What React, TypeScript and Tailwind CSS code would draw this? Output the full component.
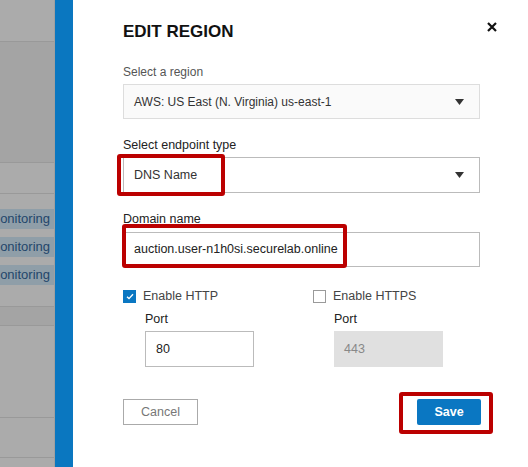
import React from 'react';

const font = { fontFamily: '"Liberation Sans", Arial, sans-serif' };

const MonitorRow = () => (
  <div className="flex h-[20px] items-center justify-end bg-[#8f9ea8] pr-[4px] text-[13px] text-[#23466b] whitespace-nowrap">
    onitoring
  </div>
);

const Caret = () => (
  <svg width="9" height="6" viewBox="0 0 9 6" className="fill-[#333]">
    <path d="M0 0 L9 0 L4.5 6 Z" />
  </svg>
);

const Checkbox = ({ checked }: { checked?: boolean }) =>
  checked ? (
    <span className="flex h-[13px] w-[13px] items-center justify-center bg-[#0a77c2]">
      <svg width="8" height="7" viewBox="0 0 8 7" fill="none">
        <path d="M1 3.8 L3 5.6 L7 1.2" stroke="white" strokeWidth="1.4" />
      </svg>
    </span>
  ) : (
    <span className="h-[13px] w-[13px] border border-[#9a9a9a] bg-white" />
  );

export default function App() {
  return (
    <div className="flex h-[467px] w-[528px] overflow-hidden" style={font}>
      {/* page behind the drawer */}
      <div className="flex w-[55px] flex-col border-r border-[#a0a0a0] bg-[#ababab]">
        <div className="h-[42px] border-b border-[#999]" />
        <div className="h-[121px] border-b border-[#999] bg-[#a4a4a4]" />
        <div className="h-[31px] border-b border-[#999]" />
        <div className="flex h-[113px] flex-col gap-[8px] border-b border-[#999] pt-[15px]">
          <MonitorRow />
          <MonitorRow />
          <MonitorRow />
        </div>
        <div className="h-[19px] border-b border-[#999] bg-[#a4a4a4]" />
        <div className="h-[92px] border-b border-[#999]" />
        <div className="h-[40px] border-b border-[#999]" />
        <div className="flex-1" />
      </div>
      <div className="w-[18px] bg-[#0a77c0]" />

      {/* drawer */}
      <div className="relative flex-1 bg-white pl-[50px] pr-[48px] pt-[22px]">
        <h2 className="h-[20px] text-[17px] font-bold leading-[20px] text-[#111]">EDIT REGION</h2>
        <button className="absolute right-[31px] top-[22px]">
          <svg width="10" height="10" viewBox="0 0 10 10">
            <path d="M1 1 L9 9 M9 1 L1 9" stroke="#111" strokeWidth="2.2" />
          </svg>
        </button>

        <label className="mt-[22px] block h-[16px] text-[12px] leading-[16px] text-[#555]">Select a region</label>
        <div className="mt-[4px] flex h-[35px] items-center justify-between border border-[#ddd] bg-[#fafafa] pl-[10px] pr-[15px] text-[12px] text-[#333]">
          <span>AWS: US East (N. Virginia) us-east-1</span>
          <Caret />
        </div>

        <label className="mt-[18px] block h-[16px] text-[12.5px] leading-[16px] text-[#222]">Select endpoint type</label>
        <div className="mt-[4px] flex h-[36px] items-center justify-between border border-[#bbb] bg-white pl-[10px] pr-[15px] text-[12.5px] text-[#333]">
          <span>DNS Name</span>
          <Caret />
        </div>

        <label className="mt-[18px] block h-[16px] text-[12.5px] leading-[16px] text-[#222]">Domain name</label>
        <div className="mt-[5px] flex h-[35px] items-center border border-[#bbb] bg-white pl-[10px] text-[12.5px] text-[#222]">
          auction.user-n1h0si.securelab.online
        </div>

        <div className="mt-[21px] grid grid-cols-[190px_1fr] text-[12.5px]">
          <div>
            <div className="flex h-[16px] items-center gap-[7px] text-[#444]">
              <Checkbox checked />
              <span>Enable HTTP</span>
            </div>
            <div className="ml-[22px] mt-[7px] h-[16px] leading-[16px] text-[#222]">Port</div>
            <div className="ml-[22px] mt-[4px] flex h-[36px] w-[109px] items-center border border-[#bbb] pl-[10px] text-[#222]">
              80
            </div>
          </div>
          <div>
            <div className="flex h-[16px] items-center gap-[7px] text-[#444]">
              <Checkbox />
              <span>Enable HTTPS</span>
            </div>
            <div className="ml-[21px] mt-[7px] h-[16px] leading-[16px] text-[#222]">Port</div>
            <div className="ml-[21px] mt-[4px] flex h-[36px] w-[109px] items-center bg-[#e0e0e0] pl-[10px] text-[#888]">
              443
            </div>
          </div>
        </div>

        <div className="mt-[32px] flex items-center justify-between text-[12.5px]">
          <button className="h-[26px] w-[75px] border border-[#aaa] text-[#777]">Cancel</button>
          <button className="mr-[-1px] h-[26px] w-[64px] rounded-[2px] bg-[#0a77c2] font-bold text-white">Save</button>
        </div>

        {/* red annotation boxes */}
        <div className="absolute left-[44px] top-[154px] h-[42px] w-[108px] rounded-[3px] border-4 border-[#bb0000]" />
        <div className="absolute left-[49px] top-[224px] h-[44px] w-[225px] rounded-[3px] border-4 border-[#bb0000]" />
        <div className="absolute left-[326px] top-[392px] h-[42px] w-[94px] rounded-[3px] border-4 border-[#bb0000]" />
      </div>
    </div>
  );
}
